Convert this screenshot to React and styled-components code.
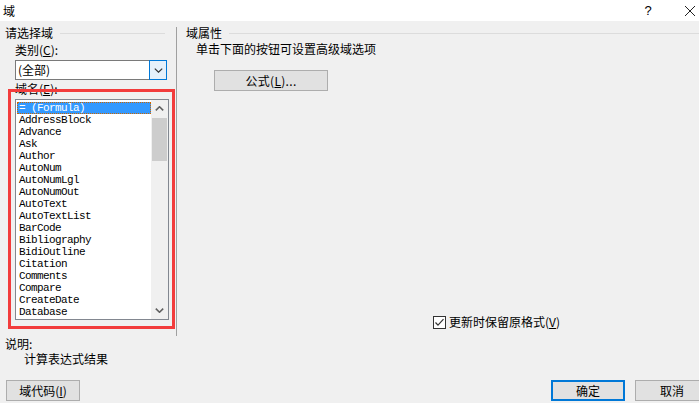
import React from "react";
import styled, { createGlobalStyle } from "styled-components";

const GlobalStyle = createGlobalStyle`
  html, body {
    margin: 0;
    padding: 0;
    background: #f0f0f0;
  }
  body {
    font-family: "Noto Sans CJK SC", "Microsoft YaHei", sans-serif;
    font-size: 12px;
    color: #000000;
  }
`;

const fields = [
  "= (Formula)",
  "AddressBlock",
  "Advance",
  "Ask",
  "Author",
  "AutoNum",
  "AutoNumLgl",
  "AutoNumOut",
  "AutoText",
  "AutoTextList",
  "BarCode",
  "Bibliography",
  "BidiOutline",
  "Citation",
  "Comments",
  "Compare",
  "CreateDate",
  "Database",
];

const Dialog = styled.div`
  width: 699px;
  height: 403px;
  overflow: hidden;
  display: flex;
  flex-direction: column;
  background: #f0f0f0;
`;

const TitleBar = styled.div`
  height: 21px;
  flex-shrink: 0;
  background: #ffffff;
  display: flex;
  align-items: center;
  padding: 0 0 0 3px;
  line-height: 16px;
`;

const Title = styled.div`
  flex: 1;
  font-size: 12px;
`;

const Help = styled.div`
  width: 12px;
  margin-right: 30px;
  font-family: "Liberation Sans", sans-serif;
  font-size: 13px;
  text-align: center;
`;

const Close = styled.div`
  width: 12px;
  height: 12px;
  margin-right: 3px;
  display: flex;
`;

const Main = styled.div`
  display: flex;
  height: 315px;
  flex-shrink: 0;
`;

const LeftPane = styled.div`
  width: 176px;
  flex-shrink: 0;
  padding: 4px 11px 0 5px;
  box-sizing: border-box;
  display: flex;
  flex-direction: column;
`;

const Divider = styled.div`
  width: 1px;
  margin-top: 6px;
  background: #a0a0a0;
`;

const RightPane = styled.div`
  flex: 1;
  padding: 4px 0 6px 9px;
  display: flex;
  flex-direction: column;
`;

const GroupHeading = styled.div`
  display: flex;
  align-items: center;
  gap: 7px;
  height: 16px;
  line-height: 16px;
  &::after {
    content: "";
    flex: 1;
    height: 1px;
    background: #dcdcdc;
  }
`;

const Indent = styled.div`
  padding-left: ${(p) => p.$by}px;
  display: flex;
  flex-direction: column;
  align-items: flex-start;
`;

const Label = styled.div`
  height: 16px;
  line-height: 16px;
  margin-top: ${(p) => p.$top || 0}px;
  white-space: nowrap;
`;

const Key = styled.span`
  text-decoration: underline;
`;

const Select = styled.div`
  margin-top: 2px;
  width: 152px;
  height: 20px;
  box-sizing: border-box;
  border: 1px solid #7a7a7a;
  background: #ffffff;
  display: flex;
  align-items: center;
`;

const SelectValue = styled.div`
  flex: 1;
  padding-left: 2px;
  line-height: 16px;
`;

const DropButton = styled.div`
  width: 18px;
  height: 20px;
  margin: -1px -1px -1px 0;
  box-sizing: border-box;
  border: 1px solid #0078d7;
  background: #e5f1fb;
  display: flex;
  align-items: center;
  justify-content: center;
`;

const Annotation = styled.div`
  margin: -8px 0 0 -7px;
  width: 167px;
  box-sizing: border-box;
  border: 3px solid #f23c3c;
  padding: 7px 3px 6px 4px;
  position: relative;
`;

const ListBox = styled.div`
  height: 221px;
  box-sizing: border-box;
  border: 1px solid #828790;
  background: #ffffff;
  display: flex;
  overflow: hidden;
`;

const Items = styled.div`
  flex: 1;
  padding: 2px 0 0 1px;
  overflow: hidden;
`;

const Item = styled.div`
  height: 12px;
  line-height: 12px;
  padding-left: 1px;
  box-sizing: border-box;
  font-family: "Liberation Mono", "DejaVu Sans Mono", monospace;
  font-size: 11px;
  letter-spacing: -0.6px;
  white-space: nowrap;
  color: ${(p) => (p.$selected ? "#ffffff" : "#000000")};
  background: ${(p) => (p.$selected ? "#3399ff" : "transparent")};
  border: 1px dotted ${(p) => (p.$selected ? "#cc6600" : "transparent")};
  display: flex;
  align-items: center;
`;

const ScrollBar = styled.div`
  width: 17px;
  flex-shrink: 0;
  background: #f0f0f0;
  display: flex;
  flex-direction: column;
  align-items: center;
`;

const Arrow = styled.div`
  height: 17px;
  width: 17px;
  display: flex;
  align-items: center;
  justify-content: center;
`;

const Track = styled.div`
  flex: 1;
  width: 100%;
  display: flex;
  flex-direction: column;
  align-items: center;
`;

const Thumb = styled.div`
  width: 15px;
  height: 43px;
  margin-top: 1px;
  background: #cdcdcd;
`;

const Hint = styled.div`
  margin-left: 10px;
  height: 16px;
  line-height: 16px;
`;

const Button = styled.div`
  width: ${(p) => p.$w || 74}px;
  height: 21px;
  box-sizing: border-box;
  border: ${(p) => (p.$default ? "2px solid #0078d7" : "1px solid #adadad")};
  background: #e1e1e1;
  display: flex;
  align-items: center;
  justify-content: center;
  line-height: 16px;
  white-space: nowrap;
  flex-shrink: 0;
`;

const FormulaButton = styled(Button)`
  margin: 13px 0 0 28px;
  letter-spacing: 0.3px;
`;

const CheckRow = styled.div`
  margin: auto 0 0 247px;
  height: 16px;
  display: flex;
  align-items: center;
  gap: 3px;
  line-height: 16px;
`;

const CheckBox = styled.div`
  width: 13px;
  height: 13px;
  box-sizing: border-box;
  border: 1px solid #333333;
  background: #ffffff;
  display: flex;
  align-items: center;
  justify-content: center;
`;

const Info = styled.div`
  padding: 0 0 0 5px;
  display: flex;
  flex-direction: column;
`;

const InfoText = styled.div`
  height: 15px;
  line-height: 15px;
  padding-left: ${(p) => p.$indent || 0}px;
`;

const Footer = styled.div`
  width: 709px;
  margin-top: 14px;
  padding-left: 6px;
  box-sizing: border-box;
  display: flex;
  justify-content: space-between;
`;

const ButtonGroup = styled.div`
  display: flex;
  gap: 10px;
`;

const Chevron = ({ up, color = "#606060", w = 9, h = 5, sw = 1.6 }) => (
  <svg width={w} height={h} viewBox={`0 0 ${w} ${h}`}>
    <polyline
      points={up ? `0.8,${h - 0.6} ${w / 2},0.8 ${w - 0.8},${h - 0.6}` : `0.8,0.6 ${w / 2},${h - 0.8} ${w - 0.8},0.6`}
      fill="none"
      stroke={color}
      strokeWidth={sw}
    />
  </svg>
);

export default function App() {
  return (
    <>
      <GlobalStyle />
      <Dialog>
        <TitleBar>
          <Title>域</Title>
          <Help>?</Help>
          <Close>
            <svg width="12" height="12" viewBox="0 0 12 12">
              <path d="M1 1 L11 11 M11 1 L1 11" stroke="#222" strokeWidth="1" fill="none" />
            </svg>
          </Close>
        </TitleBar>

        <Main>
          <LeftPane>
            <GroupHeading>请选择域</GroupHeading>
            <Indent $by={10}>
              <Label $top={1}>
                类别(<Key>C</Key>):
              </Label>
              <Select>
                <SelectValue>(全部)</SelectValue>
                <DropButton>
                  <Chevron color="#333" w={9} h={5} sw={1.2} />
                </DropButton>
              </Select>
              <Label $top={1}>
                域名(<Key>E</Key>):
              </Label>
              <Annotation>
                <ListBox>
                  <Items>
                    {fields.map((f, i) => (
                      <Item key={f} $selected={i === 0}>
                        {f}
                      </Item>
                    ))}
                  </Items>
                  <ScrollBar>
                    <Arrow>
                      <Chevron up />
                    </Arrow>
                    <Track>
                      <Thumb />
                    </Track>
                    <Arrow>
                      <Chevron />
                    </Arrow>
                  </ScrollBar>
                </ListBox>
              </Annotation>
            </Indent>
          </LeftPane>

          <Divider />

          <RightPane>
            <GroupHeading>域属性</GroupHeading>
            <Hint>单击下面的按钮可设置高级域选项</Hint>
            <FormulaButton $w={114}>
              公式(<Key>L</Key>)...
            </FormulaButton>
            <CheckRow>
              <CheckBox>
                <svg width="11" height="11" viewBox="0 0 11 11">
                  <polyline points="1.5,5.5 4,8.2 9.5,2.2" fill="none" stroke="#333" strokeWidth="1.2" />
                </svg>
              </CheckBox>
              <span>
                更新时保留原格式(<Key>V</Key>)
              </span>
            </CheckRow>
          </RightPane>
        </Main>

        <Info>
          <InfoText>说明:</InfoText>
          <InfoText $indent={19}>计算表达式结果</InfoText>
        </Info>

        <Footer>
          <Button>
            域代码(<Key>I</Key>)
          </Button>
          <ButtonGroup>
            <Button $default>确定</Button>
            <Button>取消</Button>
          </ButtonGroup>
        </Footer>
      </Dialog>
    </>
  );
}
